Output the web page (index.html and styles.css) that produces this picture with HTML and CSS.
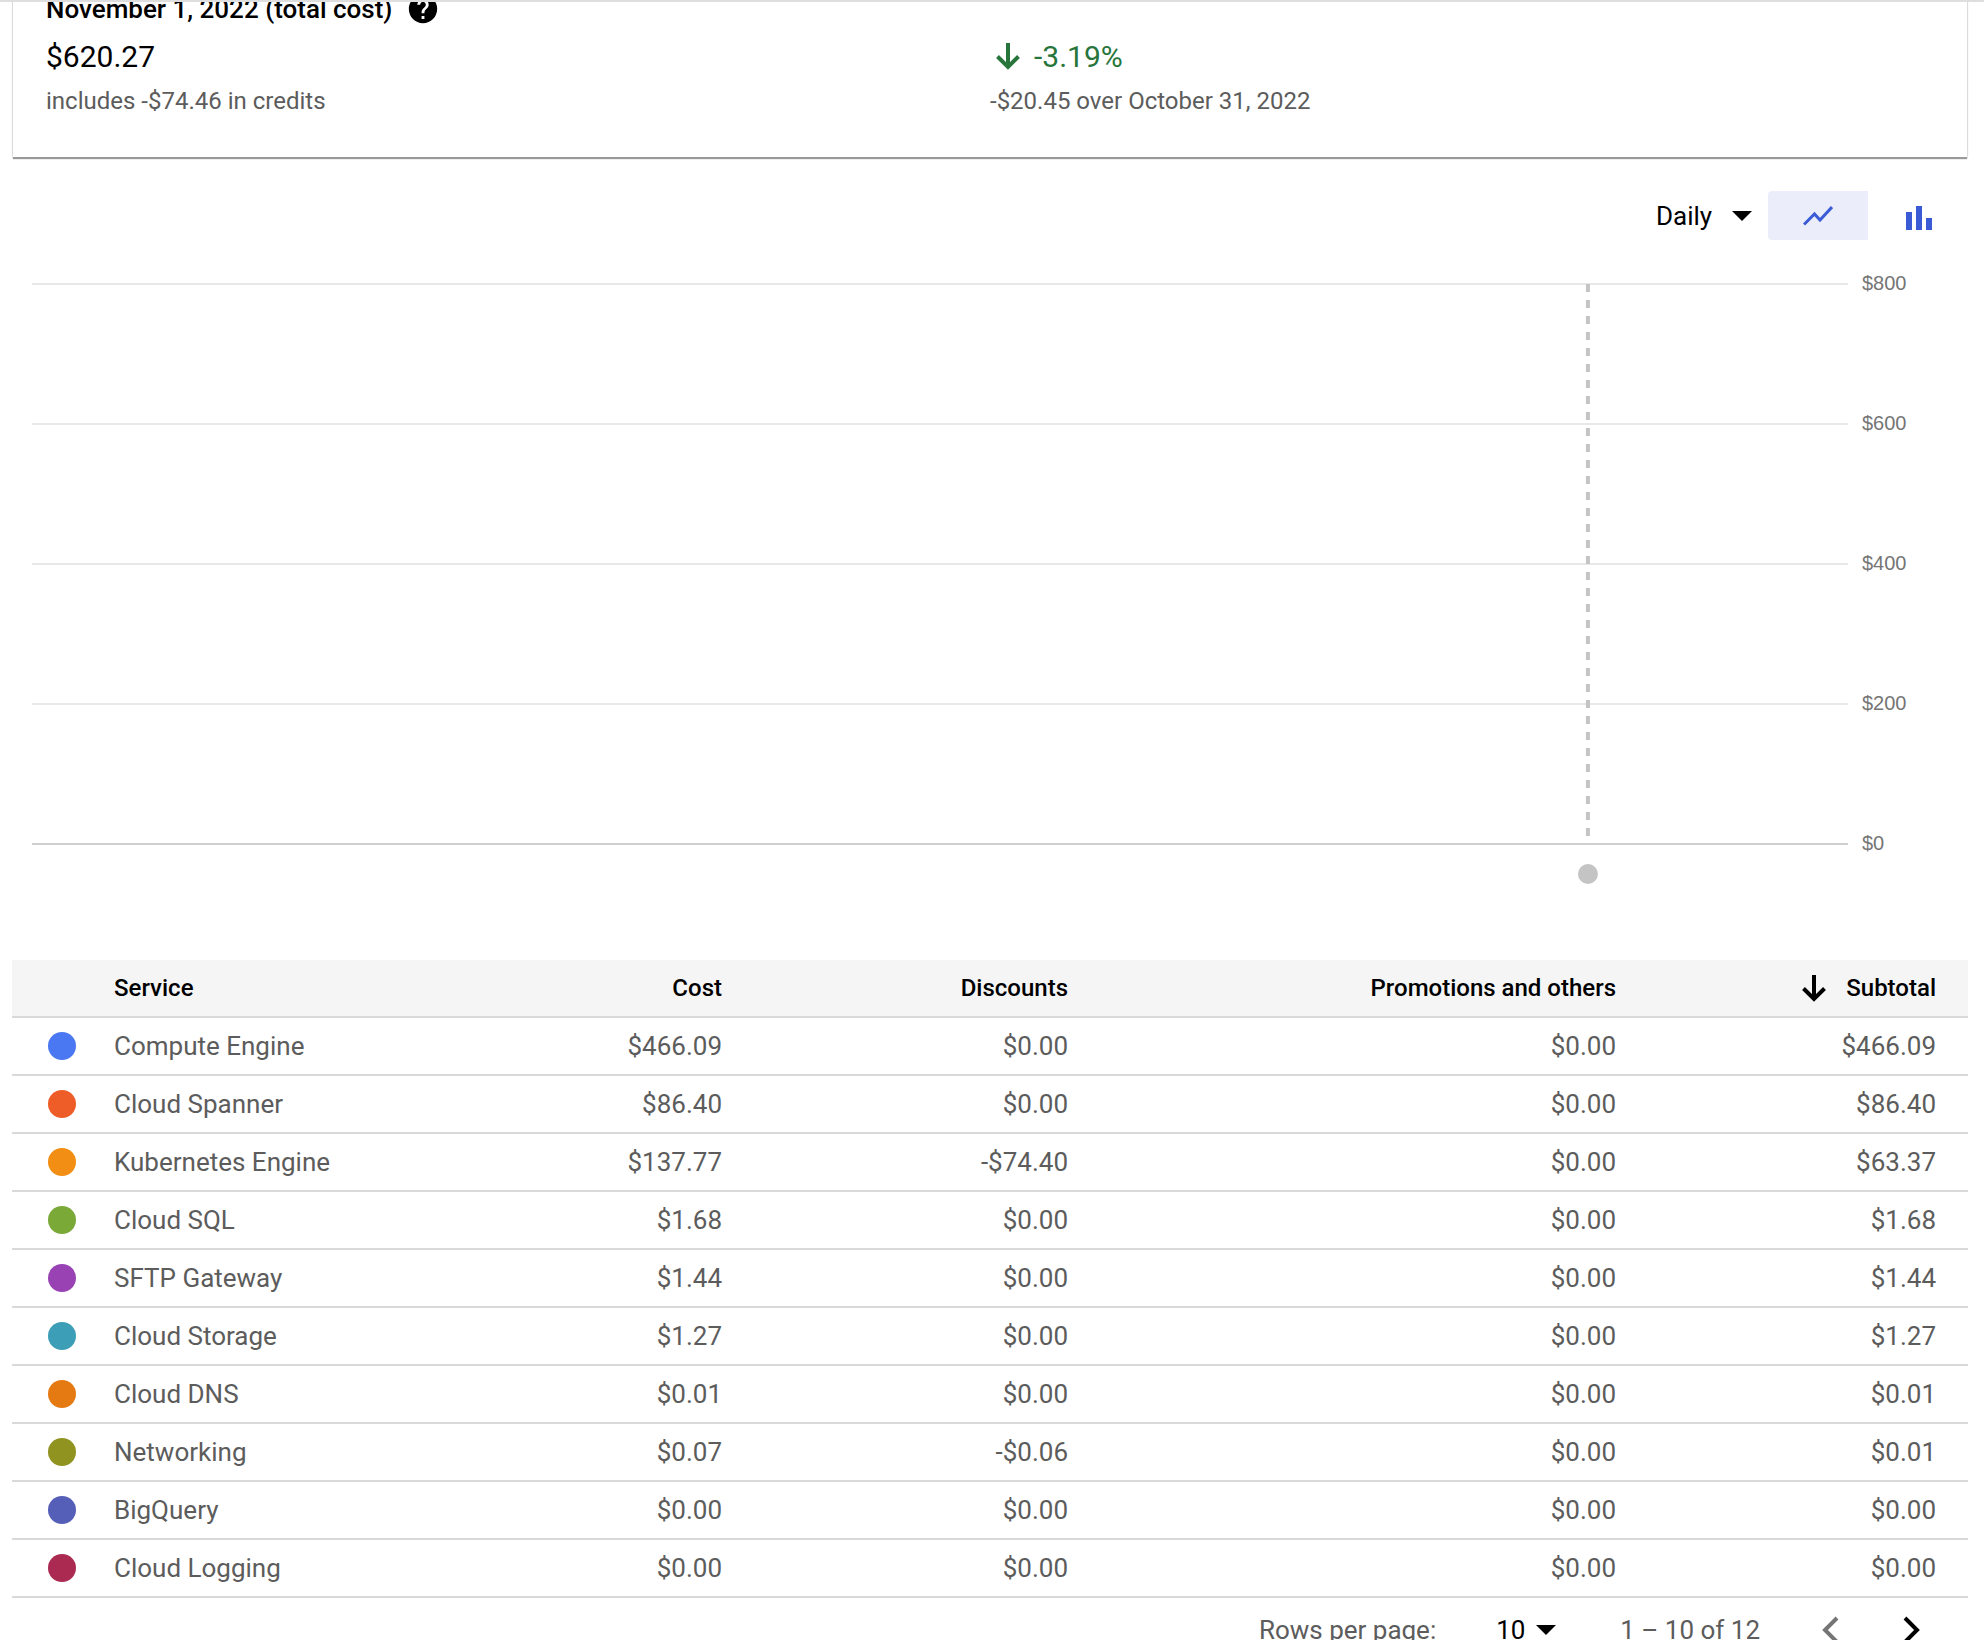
FILE: index.html
```html
<!DOCTYPE html>
<html lang="en">
<head>
<meta charset="utf-8">
<title>Billing report</title>
<link rel="stylesheet" href="styles.css">
</head>
<body>
<main class="report">
  <section class="summary">
    <div class="summary-item">
      <h2 class="summary-title">November 1, 2022 (total cost)
        <button class="icon-button" type="button" aria-label="Help"><svg width="34" height="34" viewBox="0 0 24 24"><path d="M12 2C6.480 2 2 6.480 2 12s4.480 10 10 10 10-4.480 10-10S17.520 2 12 2zm1 17h-2v-2h2v2zm2.070-7.750l-.9.920C13.450 12.900 13 13.500 13 15h-2v-.5c0-1.100.450-2.100 1.170-2.830l1.240-1.260c.370-.360.590-.860.590-1.410 0-1.100-.9-2-2-2s-2 .9-2 2H8c0-2.210 1.790-4 4-4s4 1.790 4 4c0 .880-.360 1.680-.930 2.250z"/></svg></button>
      </h2>
      <p class="summary-value">$620.27</p>
      <p class="summary-note">includes -$74.46 in credits</p>
    </div>
    <div class="summary-item">
      <p class="summary-value trend"><svg width="36" height="36" viewBox="0 0 36 36" fill="none" stroke="currentColor" stroke-width="4"><path d="M18 4v24M7.500 17.500L18 28l10.500-10.500"/></svg>-3.19%</p>
      <p class="summary-note">-$20.45 over October 31, 2022</p>
    </div>
  </section>

  <div class="toolbar">
    <select class="select" aria-label="Time granularity"><option>Daily</option></select>
    <svg class="caret" width="20" height="10" viewBox="0 0 20 10"><path d="M0 0h20L10 10z"/></svg>
    <button class="chart-type selected" type="button" aria-label="Line chart"><svg width="30" height="20" viewBox="0 0 30 20" fill="none" stroke="currentColor" stroke-width="3"><path d="M1 18.500L11.500 8l5.500 6L29 1"/></svg></button>
    <button class="chart-type" type="button" aria-label="Bar chart"><svg width="28" height="28" viewBox="-2 -4 28 28" fill="currentColor"><path d="M0 6h6v18H0zM10 0h6v24h-6zM20 12h6v12h-6z"/></svg></button>
  </div>

  <section class="chart" aria-label="Daily cost">
    <svg class="plot" width="100%" height="604">
      <g class="gridlines">
        <line x1="0" x2="100%" y1="12" y2="12"/>
        <line x1="0" x2="100%" y1="152" y2="152"/>
        <line x1="0" x2="100%" y1="292" y2="292"/>
        <line x1="0" x2="100%" y1="432" y2="432"/>
        <line class="baseline" x1="0" x2="100%" y1="572" y2="572"/>
      </g>
      <line class="marker" x1="85.680%" x2="85.680%" y1="12" y2="564"/>
      <circle class="marker-dot" cx="85.680%" cy="602" r="10"/>
    </svg>
    <div class="axis"><span>$800</span><span>$600</span><span>$400</span><span>$200</span><span>$0</span></div>
  </section>

  <table class="costs">
    <colgroup><col class="col-dot"><col class="col-service"><col class="col-cost"><col class="col-discounts"><col class="col-promotions"><col class="col-subtotal"></colgroup>
    <thead>
      <tr><th></th><th class="name">Service</th><th>Cost</th><th>Discounts</th><th>Promotions and others</th><th><span class="sorted"><svg width="24" height="28" viewBox="0 0 24 28" fill="none" stroke="currentColor" stroke-width="4"><path d="M12 1v24M1.500 14.500L12 25l10.500-10.500"/></svg>Subtotal</span></th></tr>
    </thead>
    <tbody>
      <tr><td class="key"><i class="dot compute"></i></td><td class="name">Compute Engine</td><td>$466.09</td><td>$0.00</td><td>$0.00</td><td>$466.09</td></tr>
      <tr><td class="key"><i class="dot spanner"></i></td><td class="name">Cloud Spanner</td><td>$86.40</td><td>$0.00</td><td>$0.00</td><td>$86.40</td></tr>
      <tr><td class="key"><i class="dot kubernetes"></i></td><td class="name">Kubernetes Engine</td><td>$137.77</td><td>-$74.40</td><td>$0.00</td><td>$63.37</td></tr>
      <tr><td class="key"><i class="dot sql"></i></td><td class="name">Cloud SQL</td><td>$1.68</td><td>$0.00</td><td>$0.00</td><td>$1.68</td></tr>
      <tr><td class="key"><i class="dot sftp"></i></td><td class="name">SFTP Gateway</td><td>$1.44</td><td>$0.00</td><td>$0.00</td><td>$1.44</td></tr>
      <tr><td class="key"><i class="dot storage"></i></td><td class="name">Cloud Storage</td><td>$1.27</td><td>$0.00</td><td>$0.00</td><td>$1.27</td></tr>
      <tr><td class="key"><i class="dot dns"></i></td><td class="name">Cloud DNS</td><td>$0.01</td><td>$0.00</td><td>$0.00</td><td>$0.01</td></tr>
      <tr><td class="key"><i class="dot networking"></i></td><td class="name">Networking</td><td>$0.07</td><td>-$0.06</td><td>$0.00</td><td>$0.01</td></tr>
      <tr><td class="key"><i class="dot bigquery"></i></td><td class="name">BigQuery</td><td>$0.00</td><td>$0.00</td><td>$0.00</td><td>$0.00</td></tr>
      <tr><td class="key"><i class="dot logging"></i></td><td class="name">Cloud Logging</td><td>$0.00</td><td>$0.00</td><td>$0.00</td><td>$0.00</td></tr>
    </tbody>
  </table>

  <nav class="pager" aria-label="Table pages">
    <label class="pager-label" for="page-size">Rows per page:</label>
    <select class="select page-size" id="page-size"><option>10</option></select>
    <svg class="caret" width="20" height="10" viewBox="0 0 20 10"><path d="M0 0h20L10 10z"/></svg>
    <span class="range">1 – 10 of 12</span>
    <button class="icon-button previous" type="button" aria-label="Previous page" disabled><svg width="18" height="28" viewBox="0 0 18 28" fill="none" stroke="currentColor" stroke-width="4"><path d="M16 2L4 14l12 12"/></svg></button>
    <button class="icon-button next" type="button" aria-label="Next page"><svg width="18" height="28" viewBox="0 0 18 28" fill="none" stroke="currentColor" stroke-width="4"><path d="M2 2l12 12L2 26"/></svg></button>
  </nav>
</main>
</body>
</html>
```
FILE: styles.css
```css
* { box-sizing: border-box; }

body {
  margin: 0;
  background: #fff;
  color: #000;
  font-family: Roboto, "Liberation Sans", sans-serif;
  font-size: 24px;
  line-height: 32px;
}

h2, p { margin: 0; }
svg { display: block; flex: none; }

.report {
  height: 100vh;
  overflow: hidden;
  padding: 0 16px 0 12px;
  border-top: 2px solid #dedede;
}

/* Summary card, scrolled partly under the page edge */
.summary {
  display: grid;
  grid-template-columns: 944px 1fr;
  align-items: end;
  margin: -17px 1px 0;
  padding: 0 33px 36px;
  box-shadow: 0 2px 1px #999, 0 0 2px #bbb;
}

.summary-title {
  display: flex;
  align-items: center;
  gap: 14px;
  font-size: 26px;
  font-weight: 500;
  line-height: 48px;
}

.summary-value {
  font-size: 30px;
  line-height: 48px;
}

.summary-note {
  color: #5c5c5c;
  line-height: 40px;
}

.trend {
  display: flex;
  align-items: center;
  gap: 8px;
  color: #27753a;
}

.icon-button {
  display: flex;
  padding: 0;
  border: 0;
  background: none;
  color: #000;
}

/* Chart controls */
.toolbar {
  display: flex;
  justify-content: flex-end;
  align-items: center;
  margin-top: 34px;
}

.select {
  appearance: none;
  padding: 0;
  border: 0;
  background: none;
  color: #000;
  font: inherit;
  font-size: 26px;
}

.caret { margin-left: 19px; }

.chart-type {
  display: flex;
  justify-content: center;
  align-items: center;
  width: 100px;
  height: 49px;
  padding: 0;
  border: 0;
  border-radius: 0 4px 4px 0;
  background: none;
  color: #3b5bd6;
}

.chart-type.selected {
  margin-left: 16px;
  border-radius: 4px 0 0 4px;
  background: #ebeefa;
}

/* Chart */
.chart {
  display: grid;
  grid-template-columns: 1fr 106px;
  column-gap: 14px;
  margin-top: 32px;
  padding-left: 20px;
}

.plot { overflow: visible; }
.gridlines { stroke: #e8e8e8; stroke-width: 2; }
.baseline { stroke: #d0d0d0; }
.marker { stroke: #c4c4c4; stroke-width: 4; stroke-dasharray: 8; }
.marker-dot { fill: #c4c4c4; }

.axis {
  display: flex;
  flex-direction: column;
  justify-content: space-between;
  height: 582px;
  color: #757575;
  font: 20px/22px "Liberation Sans", Arial, sans-serif;
}

/* Cost table */
.costs {
  width: 100%;
  margin-top: 84px;
  border-collapse: separate;
  border-spacing: 0;
  table-layout: fixed;
}

.col-dot { width: 102px; }
.col-service { width: 300px; }
.col-cost { width: 340px; }
.col-discounts { width: 346px; }
.col-promotions { width: 548px; }
.col-subtotal { width: 320px; }

.costs th,
.costs td {
  height: 58px;
  padding: 0 32px 0 0;
  border-bottom: 2px solid #d9d9d9;
  text-align: right;
}

.costs th {
  background: #f5f5f5;
  font-weight: 500;
}

.costs td {
  color: #5c5c5c;
  font-size: 26px;
}

.costs .name { padding: 0; text-align: left; }
.costs .key { padding: 0 0 0 36px; }

.sorted {
  display: flex;
  justify-content: flex-end;
  align-items: center;
  gap: 20px;
}

.dot {
  display: block;
  width: 28px;
  height: 28px;
  border-radius: 50%;
}

.compute { background: #4978f2; }
.spanner { background: #ee5d27; }
.kubernetes { background: #f28e13; }
.sql { background: #7aa938; }
.sftp { background: #9842b4; }
.storage { background: #3d9eb8; }
.dns { background: #e57a12; }
.networking { background: #909320; }
.bigquery { background: #555fb8; }
.logging { background: #ab2a52; }

/* Pager */
.pager {
  display: flex;
  justify-content: flex-end;
  align-items: center;
  height: 64px;
  padding-right: 47px;
}

.pager-label, .range { color: #5c5c5c; font-size: 26px; }
.page-size { margin-left: 60px; }
.pager .caret { margin-left: 10px; }
.range { margin-left: 64px; }
.previous { margin-left: 61px; color: #757575; }
.next { margin-left: 64px; }
```
